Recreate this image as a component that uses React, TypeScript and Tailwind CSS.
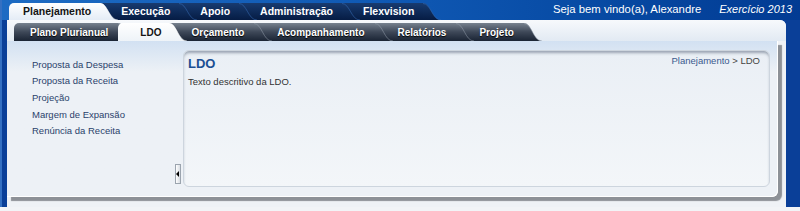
type TabStyle = 'topActive' | 'topDark' | 'subActive' | 'subDark';

type TabDef = {
    label: string;
    style: TabStyle;
    pad: string;
    z: string;
};

const bodyClass: Record<TabStyle, string> = {
    topActive: 'bg-linear-to-b from-[#ffffff] to-[#e4ecf6] text-[#141414] h-[17px] text-[10.5px]',
    topDark: 'bg-linear-to-b from-[#183b70] to-[#061c44] text-white h-[17px] text-[10.5px]',
    subActive: 'bg-linear-to-b from-[#ffffff] to-[#eef3f8] text-[#141414] h-[18px] text-[10px]',
    subDark:
        'bg-linear-to-b from-[#77828f] via-[#3e4858] to-[#1a2434] text-white h-[18px] text-[10px] [text-shadow:0_1px_1px_#000]',
};

const stops: Record<TabStyle, [string, string, string]> = {
    topActive: ['#ffffff', '#f2f6fb', '#e4ecf6'],
    topDark: ['#183b70', '#0f2c5a', '#061c44'],
    subActive: ['#ffffff', '#f6f9fb', '#eef3f8'],
    subDark: ['#77828f', '#3e4858', '#1a2434'],
};

const edge: Record<TabStyle, string> = {
    topActive: '#ffffff',
    topDark: '#3c74bf',
    subActive: '#ffffff',
    subDark: '#9aa4b1',
};

const topTabs: TabDef[] = [
    { label: 'Planejamento', style: 'topActive', pad: 'pl-[14px] pr-[9px] rounded-tl-[5px]', z: 'z-50' },
    { label: 'Execução', style: 'topDark', pad: 'pl-[21px] pr-[9px]', z: 'z-40' },
    { label: 'Apoio', style: 'topDark', pad: 'pl-[21px] pr-[9px]', z: 'z-30' },
    { label: 'Administração', style: 'topDark', pad: 'pl-[21px] pr-[9px]', z: 'z-20' },
    { label: 'Flexvision', style: 'topDark', pad: 'pl-[21px] pr-[9px]', z: 'z-10' },
];

const subTabs: TabDef[] = [
    { label: 'Plano Plurianual', style: 'subDark', pad: 'pl-[16px] pr-[10px] rounded-tl-[5px]', z: 'z-40' },
    { label: 'LDO', style: 'subActive', pad: 'pl-[22px] pr-[8px] rounded-tl-[5px]', z: 'z-50' },
    { label: 'Orçamento', style: 'subDark', pad: 'pl-[22px] pr-[10px]', z: 'z-30' },
    { label: 'Acompanhamento', style: 'subDark', pad: 'pl-[23px] pr-[10px]', z: 'z-20' },
    { label: 'Relatórios', style: 'subDark', pad: 'pl-[23px] pr-[10px]', z: 'z-10' },
    { label: 'Projeto', style: 'subDark', pad: 'pl-[23px] pr-[10px]', z: 'z-0' },
];

const menu = ['Proposta da Despesa', 'Proposta da Receita', 'Projeção', 'Margem de Expansão', 'Renúncia da Receita'];

function Tab({ tab, id }: { tab: TabDef; id: string }) {
    const h = tab.style.startsWith('top') ? 17 : 18;
    const [a, b, c] = stops[tab.style];
    return (
        <div className={`relative flex -mr-[18px] ${tab.z}`}>
            <div className={`flex items-center font-bold whitespace-nowrap ${bodyClass[tab.style]} ${tab.pad}`}>
                {tab.label}
            </div>
            <svg width="18" height={h} viewBox={`0 0 18 ${h}`} className="block">
                <defs>
                    <linearGradient id={id} x1="0" y1="0" x2="0" y2="1">
                        <stop offset="0" stopColor={a} />
                        <stop offset="0.5" stopColor={b} />
                        <stop offset="1" stopColor={c} />
                    </linearGradient>
                </defs>
                <path d={`M0 0 C8 0 9 ${h} 18 ${h} L0 ${h} Z`} fill={`url(#${id})`} />
                <path d={`M0 0.5 C8 0.5 9 ${h} 18 ${h}`} fill="none" stroke={edge[tab.style]} strokeOpacity="0.5" />
            </svg>
        </div>
    );
}

export default function App() {
    return (
        <div className="h-[211px] w-[800px] overflow-hidden bg-[#f2f4f7] font-['Liberation_Sans',Arial,sans-serif]">
            <div className="flex h-[207px] flex-col border-l-2 border-[#3470c2] bg-[#0a3f98]">
                {/* top menu */}
                <div className="flex h-[20px] items-end bg-linear-to-r from-[#1d6bc3] via-[#0f58b3] to-[#023b93] pl-[7px] pr-[8px]">
                    {topTabs.map((t, i) => (
                        <Tab key={t.label} tab={t} id={`top-${i}`} />
                    ))}
                    <div className="ml-auto flex items-center gap-[18px] self-center pb-[1px] text-white">
                        <span className="text-[11.3px]">Seja bem vindo(a), Alexandre</span>
                        <span className="text-[11px] italic">Exercício 2013</span>
                    </div>
                </div>

                <div className="flex flex-1 pl-[5px] pr-[14px]">
                    <div className="flex flex-1 flex-col rounded-tr-[6px] bg-[#eff2f6]">
                        {/* sub menu */}
                        <div className="flex h-[21px] items-end rounded-tr-[6px] bg-linear-to-b from-[#f7f9fc] to-[#e2eaf3] pl-[7px]">
                            {subTabs.map((t, i) => (
                                <Tab key={t.label} tab={t} id={`sub-${i}`} />
                            ))}
                        </div>

                        {/* main area */}
                        <div className="mr-[8px] mb-[10px] flex flex-1 rounded-br-[6px] border-r border-b border-white bg-linear-to-b from-[#d2e1f2] from-0% to-[#edf1f6] to-[20%] py-[9px] pr-[7px] shadow-[4px_4px_1px_#8d9197]">
                            <div className="w-[168px] pl-[25px] pt-[6.5px] text-[9.5px] leading-[16.7px] text-[#2a3f6b]">
                                {menu.map((m) => (
                                    <div key={m}>{m}</div>
                                ))}
                            </div>

                            <div className="mr-[2px] mb-[3px] flex h-[20px] w-[6px] items-center self-end border border-[#9ba4ae] bg-linear-to-r from-[#ffffff] to-[#d8dde3]">
                                <div className="h-0 w-0 border-y-[3px] border-r-[3px] border-y-transparent border-r-black" />
                            </div>

                            <div className="flex flex-1 flex-col rounded-[6px] border border-[#cdd5de] bg-linear-to-b from-[#eaeff5] to-[#f3f6f9] pl-[4px] pr-[9px] pt-[4px] shadow-[inset_0_3px_3px_-1px_rgba(55,70,95,0.45)]">
                                <div className="flex items-start justify-between">
                                    <h1 className="text-[13px] font-bold leading-[17px] text-[#1b4f93]">LDO</h1>
                                    <div className="text-[9.5px] leading-[12px]">
                                        <span className="text-[#3b5a8e]">Planejamento</span>
                                        <span className="text-[#444]"> &gt; LDO</span>
                                    </div>
                                </div>
                                <p className="mt-[3px] text-[9.5px] leading-[14px] text-[#333]">Texto descritivo da LDO.</p>
                            </div>
                        </div>
                    </div>
                </div>
            </div>
        </div>
    );
}
